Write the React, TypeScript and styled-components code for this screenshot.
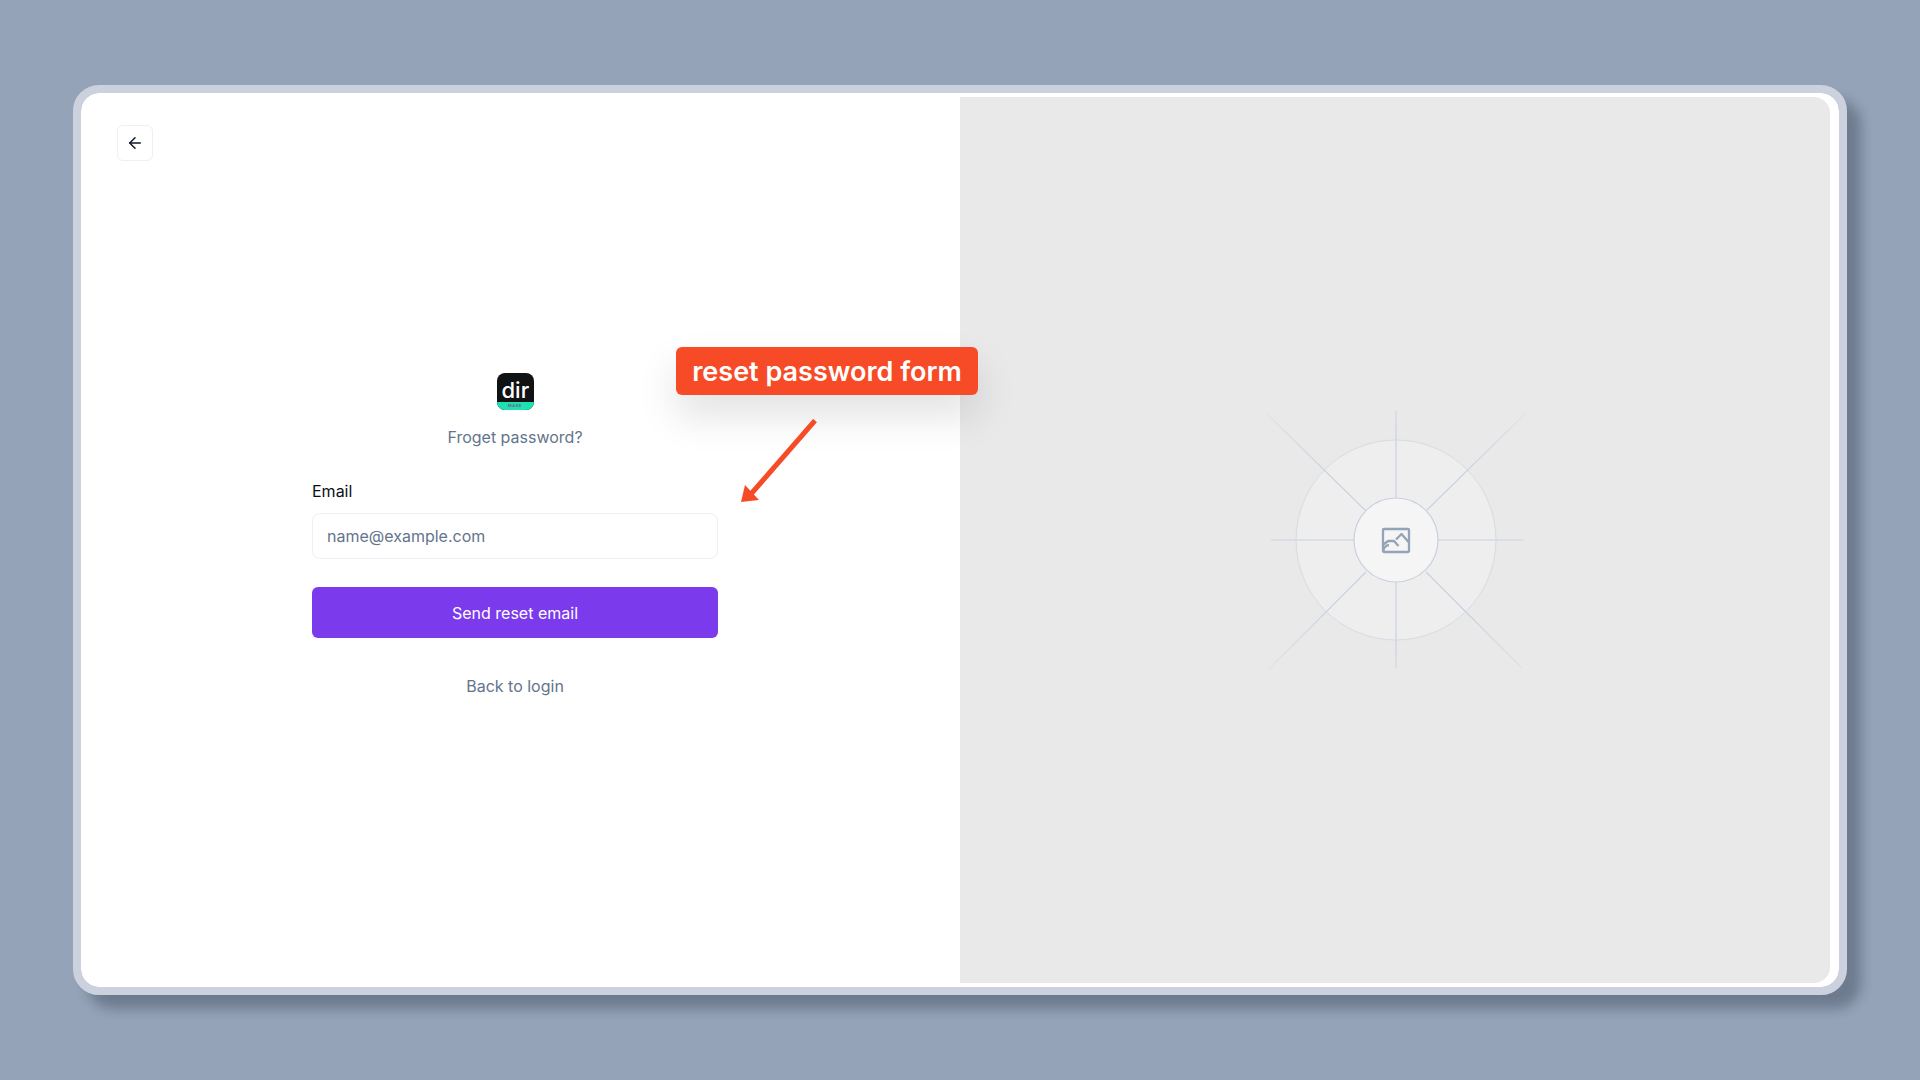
import { ArrowLeft } from 'lucide-react';
import styled, { createGlobalStyle } from 'styled-components';

const rays = [
  [1396, 410, 1396, 497],
  [1396, 581, 1396, 667],
  [1271, 539, 1354, 539],
  [1438, 539, 1524, 539],
  [1267, 413, 1366, 510],
  [1427, 509, 1526, 412],
  [1366, 571, 1269, 668],
  [1426, 571, 1522, 667],
];

export default function App() {
  return (
    <Page>
      <GlobalStyle />
      <Frame>
        <FormPane>
          <BackButton aria-label='Back'>
            <ArrowLeft size={18} strokeWidth={2} />
          </BackButton>
          <FormColumn>
            <Logo>
              <LogoWord>dir</LogoWord>
              <LogoStrip>MAKE</LogoStrip>
            </Logo>
            <Heading>Froget password?</Heading>
            <Label htmlFor='email'>Email</Label>
            <Input id='email' placeholder='name@example.com' />
            <SubmitButton>Send reset email</SubmitButton>
            <BackLink>Back to login</BackLink>
          </FormColumn>
        </FormPane>
        <ImagePane>
          <Placeholder viewBox='1261 404 270 270'>
            <defs>
              <radialGradient
                id='ray'
                gradientUnits='userSpaceOnUse'
                cx='1396'
                cy='539'
                r='185'
              >
                <stop offset='0.55' stopColor='#c9d1e0' />
                <stop offset='1' stopColor='#c9d1e0' stopOpacity='0.25' />
              </radialGradient>
            </defs>
            <circle cx='1396' cy='539' r='100' fill='#eeeeee' stroke='#d6dbe5' />
            {rays.map(([x1, y1, x2, y2]) => (
              <line
                key={`${x1}-${y1}`}
                x1={x1}
                y1={y1}
                x2={x2}
                y2={y2}
                stroke='url(#ray)'
                strokeWidth='1.2'
              />
            ))}
            <circle cx='1396' cy='539' r='42' fill='#f5f5f5' stroke='#c9d1e0' strokeWidth='1.2' />
            <g fill='none' stroke='#94a3b8' strokeWidth='2.3' strokeLinejoin='round'>
              <rect x='1383' y='528' width='26' height='23' rx='1' />
              <path d='M1383.5 543.5L1388 540H1394L1398.5 545' />
              <path d='M1396 538.5L1401.5 533L1409 541.5' />
              <path d='M1383.5 550a6 6 0 0 1 5.5-6' />
            </g>
          </Placeholder>
        </ImagePane>
        <Callout>reset password form</Callout>
        <CalloutArrow viewBox='0 0 76 84'>
          <path d='M74 1.5L10 75' stroke='#f64b26' strokeWidth='5' />
          <path d='M0 83L4 66L18 81Z' fill='#f64b26' />
        </CalloutArrow>
      </Frame>
    </Page>
  );
}

const GlobalStyle = createGlobalStyle`
  html, body {
    margin: 0;
    padding: 0;
  }

  * {
    box-sizing: border-box;
  }
`;

const Page = styled.div`
  min-height: 100vh;
  padding: 85px 73px;
  background: #94a3b8;
  font-family: Inter, 'Liberation Sans', sans-serif;
  overflow: hidden;
`;

const Frame = styled.div`
  position: relative;
  display: grid;
  grid-template-columns: 879px 1fr;
  width: 1774px;
  height: 910px;
  border: 8px solid #cbd1dd;
  border-radius: 26px;
  background: #fff;
  background-clip: padding-box;
  box-shadow: 14px 14px 12px rgba(30, 41, 59, 0.32);
`;

const FormPane = styled.div`
  display: flex;
  flex-direction: column;
  align-items: flex-start;
  padding: 32px 0 0 36px;
`;

const BackButton = styled.button`
  display: flex;
  align-items: center;
  justify-content: center;
  width: 36px;
  height: 36px;
  padding: 0;
  border: 1px solid #eeeff1;
  border-radius: 6px;
  background: #fff;
  color: #0f172a;
`;

const FormColumn = styled.div`
  display: flex;
  flex-direction: column;
  width: 406px;
  margin: 212px 0 0 195px;
`;

const Logo = styled.div`
  display: flex;
  flex-direction: column;
  align-self: center;
  width: 37px;
  height: 37px;
  border-radius: 8px;
  background: #101214;
  overflow: hidden;
`;

const LogoWord = styled.div`
  flex: 1;
  min-height: 0;
  padding-top: 6px;
  padding-left: 5px;
  color: #fff;
  font-size: 22px;
  font-weight: 500;
  line-height: 23px;
  white-space: nowrap;
`;

const LogoStrip = styled.div`
  flex: none;
  height: 8px;
  background: #1fe0b0;
  color: #7c5a8c;
  font-size: 4px;
  font-weight: 700;
  line-height: 8px;
  letter-spacing: 0.5px;
  text-align: center;
`;

const Heading = styled.div`
  margin-top: 16px;
  color: #64748b;
  font-size: 16px;
  line-height: 22px;
  text-align: center;
`;

const Label = styled.label`
  margin-top: 33px;
  color: #0b0f19;
  font-size: 16px;
  font-weight: 400;
  line-height: 20px;
`;

const Input = styled.input`
  height: 46px;
  margin-top: 12px;
  padding: 0 14px;
  border: 1.5px solid #eff0f2;
  border-radius: 8px;
  font: 400 16px Inter, 'Liberation Sans', sans-serif;

  &::placeholder {
    color: #64748b;
    opacity: 1;
  }
`;

const SubmitButton = styled.button`
  height: 51px;
  margin-top: 28px;
  border: 0;
  border-radius: 6px;
  background: #7c3aed;
  color: #fff;
  font: 400 16px Inter, 'Liberation Sans', sans-serif;
`;

const BackLink = styled.a`
  margin-top: 37px;
  color: #64748b;
  font-size: 16px;
  line-height: 22px;
  text-align: center;
`;

const ImagePane = styled.div`
  display: flex;
  align-items: center;
  justify-content: center;
  margin: 4px 9px 4px 0;
  padding: 0 0 0 1px;
  border-radius: 0 16px 16px 0;
  background: #e9e9e9;
`;

const Placeholder = styled.svg`
  width: 270px;
  height: 270px;
`;

const Callout = styled.div`
  position: absolute;
  top: 254px;
  left: 595px;
  width: 302px;
  height: 48px;
  border-radius: 6px;
  background: #f64b26;
  box-shadow: 0 20px 40px rgba(0, 0, 0, 0.12);
  color: #fff;
  font-size: 27px;
  font-weight: 600;
  line-height: 49px;
  text-align: center;
  white-space: nowrap;
`;

const CalloutArrow = styled.svg`
  position: absolute;
  top: 326px;
  left: 660px;
  width: 76px;
  height: 84px;
`;
